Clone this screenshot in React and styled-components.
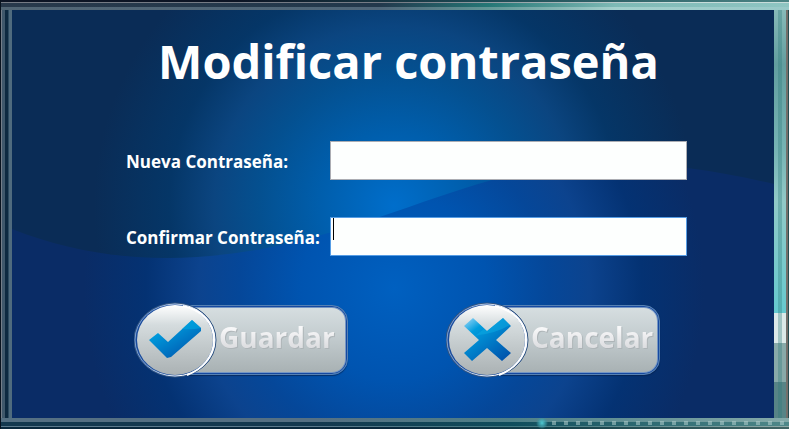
import React from "react";
import styled, { createGlobalStyle } from "styled-components";

const GlobalStyle = createGlobalStyle`
  * { box-sizing: border-box; }
  body { margin: 0; background: #0a2c56; font-family: "Open Sans", "Noto Sans", sans-serif; }
`;

const WindowFrame = styled.main`
  min-height: 100vh;
  display: flex;
  padding: 10px 15px 11px 12px;
  background:
    linear-gradient(#08131f, #08131f) 0 0 / 1px 100% no-repeat,
    radial-gradient(circle, #4fc9d2, #3b9aa688 50%, transparent 70%) 69% 100% / 12px 12px no-repeat,
    repeating-linear-gradient(90deg, transparent 0 8px, #b4d0cf88 8px 12px) 100% calc(100% - 4px) / 31% 4px no-repeat,
    linear-gradient(90deg, #0c1424 30%, #1d4b55 62%, #4b8585) 0 0 / 100% 2px no-repeat,
    linear-gradient(90deg, #767b85 50%, #c8dcda 85%) 0 2px / 100% 1px no-repeat,
    linear-gradient(90deg, #28394b, #22384c 48%, #257776 62%, #7eb9b5 78%, #8ec5c2) 0 3px / 100% 4px no-repeat,
    linear-gradient(90deg, #526675, #50677a 48%, #629897 62%, #a4d0cc 78%, #98c9c8) 0 7px / 100% 3px no-repeat,
    linear-gradient(90deg, #09283c 50%, #14414b 70%, #416565) 0 100% / 100% 2px no-repeat,
    linear-gradient(90deg, #5c7a8c 40%, #40777f 65%, #91aaa7) 0 calc(100% - 2px) / 100% 1px no-repeat,
    linear-gradient(90deg, #14394f 40%, #104e5d 65%, #4f8889) 0 calc(100% - 3px) / 100% 4px no-repeat,
    linear-gradient(90deg, #557083 40%, #4e8088 65%, #84aaa9) 0 calc(100% - 7px) / 100% 4px no-repeat,
    linear-gradient(90deg, #747e89 0 1px, #3f586b 1px 4px, #0d2a41 4px 7px, #2c4c62 7px 8px, #4f6b7e 8px 12px) 1px 0 / 12px 100% no-repeat,
    linear-gradient(90deg, transparent 0 4px, #2a777755 4px 8px, transparent 8px 12px, #736f6a 12px 14px, #264c50 14px) 100% 0 / 15px 100% no-repeat,
    linear-gradient(#8ebfbd, #629e9f 15%, #76b4b4 35%, #91c9c7 47%, #65c9cf 73%, #dce9e8 73% 80%, #88aaa9 80% 89%, #578486 89%) 100% 0 / 15px 100% no-repeat,
    #203f50;
`;

const Panel = styled.section`
  position: relative;
  isolation: isolate;
  flex: 1;
  min-width: 0;
  display: flex;
  flex-direction: column;
  overflow: hidden;
  background: #0a2c56;
`;

const Backdrop = styled.svg`
  position: absolute;
  inset: 0;
  z-index: -1;
  width: 100%;
  height: 100%;
`;

const Title = styled.h1`
  margin: 17px 0 0 31px;
  color: #fff;
  font-size: 47px;
  line-height: 68px;
  font-weight: 700;
  text-align: center;
  white-space: nowrap;
`;

const Form = styled.form`
  display: flex;
  flex-direction: column;
  margin: 46px 87px 0 114px;
`;

const Fields = styled.div`
  display: grid;
  gap: 37px;
`;

const Field = styled.div`
  display: grid;
  grid-template-columns: 204px minmax(0, 1fr);
  align-items: center;
`;

const Label = styled.label`
  padding-top: 3px;
  color: #fff;
  font-size: 17px;
  line-height: 24px;
  font-weight: 700;
  white-space: nowrap;
`;

const InputWrap = styled.div`
  position: relative;
  display: flex;
`;

const TextInput = styled.input`
  width: 100%;
  height: 39px;
  padding: 0 4px;
  border: 1px solid ${(p) => (p.$active ? "#569de5" : "#abadb3")};
  border-radius: 0;
  background: #fdfffe;
  font: 17px "Open Sans", sans-serif;
  caret-color: transparent;
  outline: none;
`;

const Caret = styled.span`
  position: absolute;
  left: 3px;
  top: 1px;
  width: 1px;
  height: 22px;
  background: #000;
`;

const Actions = styled.div`
  display: flex;
  gap: 98px;
  margin: 46px 0 0 8px;
`;

const ActionButton = styled.button`
  display: flex;
  align-items: center;
  width: 214px;
  height: 76px;
  padding: 0;
  border: 0;
  background: none;
  font: 700 28px/36px "Open Sans", "Noto Sans", sans-serif;
  cursor: pointer;
`;

const Badge = styled.svg`
  position: relative;
  z-index: 1;
  flex: none;
  width: 83px;
  height: 76px;
`;

const Plate = styled.span`
  display: flex;
  align-items: center;
  flex: 1;
  height: 70px;
  margin-left: -42px;
  padding: 0 0 6px 43px;
  border: 1px solid #5681b3;
  border-radius: 16px;
  background: linear-gradient(#d7dfe1, #c3cccf 45%, #a7b0b2) padding-box;
  box-shadow: inset 0 0 0 1px #1649a0, inset 0 0 0 2px #7496c4, 0 1px 1px #071c4499;
`;

const Caption = styled.span`
  background: linear-gradient(#f8f8f9 25%, #dcdde0 80%);
  background-clip: text;
  color: transparent;
  filter: drop-shadow(1px 1px 0 #aeb5b8);
`;

function Wallpaper() {
  return (
    <Backdrop viewBox="0 0 762 408" preserveAspectRatio="none" aria-hidden="true">
      <defs>
        <radialGradient id="sky" gradientUnits="userSpaceOnUse" cx="382" cy="196" r="300">
          <stop offset="0" stopColor="#006ecb" />
          <stop offset=".25" stopColor="#005eac" />
          <stop offset=".45" stopColor="#045090" />
          <stop offset=".6" stopColor="#0b4580" />
          <stop offset=".75" stopColor="#053667" />
          <stop offset="1" stopColor="#0a2c56" />
        </radialGradient>
        <radialGradient id="sea" gradientUnits="userSpaceOnUse" cx="382" cy="278" r="310">
          <stop offset="0" stopColor="#0060c0" />
          <stop offset=".3" stopColor="#0054b0" />
          <stop offset=".5" stopColor="#054799" />
          <stop offset=".63" stopColor="#0c438e" />
          <stop offset=".8" stopColor="#043273" />
          <stop offset="1" stopColor="#0a2c66" />
        </radialGradient>
      </defs>
      <path fill="url(#sky)" d="M0 0h762v408H0z" />
      <path fill="url(#sea)" d="M0 219C78 250 160 255 250 239C345 220 400 193 480 170C575 145 660 150 762 174V408H0z" />
    </Backdrop>
  );
}

function RoundBadge({ id, children }) {
  return (
    <Badge viewBox="0 0 83 76" aria-hidden="true">
      <defs>
        <linearGradient id={`${id}-disc`} x2="0" y2="1">
          <stop offset="0" stopColor="#fff" />
          <stop offset=".28" stopColor="#d5dcde" />
          <stop offset="1" stopColor="#aab1b3" />
        </linearGradient>
        <linearGradient id={`${id}-rim`} x2="1" y2=".2">
          <stop offset=".2" stopColor="#7d9fce" />
          <stop offset=".75" stopColor="#fff" />
        </linearGradient>
        <linearGradient id={`${id}-mark`} x2=".8" y2="1">
          <stop offset="0" stopColor={id === "cancel" ? "#a5dcfa" : "#0093d8"} />
          <stop offset=".28" stopColor="#009cdd" />
          <stop offset="1" stopColor="#0054ad" />
        </linearGradient>
      </defs>
      <ellipse cx="41" cy="38" rx="41" ry="37" fill="#194b9c" stroke="#33557f" />
      <ellipse cx="41" cy="38" rx="40" ry="36" fill="none" stroke={`url(#${id}-rim)`} />
      <ellipse cx="41" cy="38" rx="38" ry="35" fill={`url(#${id}-disc)`} />
      <path d="M49 4C69 8 80 22 80 38S69 67 53 73" fill="none" stroke="#fff" strokeWidth="2" />
      {children}
    </Badge>
  );
}

function SaveIcon() {
  return (
    <RoundBadge id="save">
      <path fill="url(#save-mark)" d="M15 38L24 31L34 40L58 18L67 26V29L37 55L33 56Z" />
      <path fill="#00a6e1" fillOpacity=".6" d="M58 18L67 26Q58 28 48 27Z" />
    </RoundBadge>
  );
}

function CancelIcon() {
  return (
    <RoundBadge id="cancel">
      <path fill="url(#cancel-mark)" d="M27 16L41 29L57 16L65 24L50 38L65 51L56 59L41 46L26 59L18 51L33 38L18 24Z" />
      <path fill="#0bace4" fillOpacity=".5" d="M41 29L57 16L64 23Q50 31 33 33L29 34L38 27Z" />
    </RoundBadge>
  );
}

export default function App() {
  return (
    <>
      <GlobalStyle />
      <WindowFrame>
        <Panel>
          <Wallpaper />
          <Title>Modificar contraseña</Title>
          <Form onSubmit={(e) => e.preventDefault()}>
            <Fields>
              <Field>
                <Label htmlFor="new-password">Nueva Contraseña:</Label>
                <InputWrap>
                  <TextInput id="new-password" type="password" />
                </InputWrap>
              </Field>
              <Field>
                <Label htmlFor="confirm-password">Confirmar Contraseña:</Label>
                <InputWrap>
                  <TextInput id="confirm-password" type="password" $active />
                  <Caret />
                </InputWrap>
              </Field>
            </Fields>
            <Actions>
              <ActionButton type="submit">
                <SaveIcon />
                <Plate><Caption>Guardar</Caption></Plate>
              </ActionButton>
              <ActionButton type="button">
                <CancelIcon />
                <Plate><Caption>Cancelar</Caption></Plate>
              </ActionButton>
            </Actions>
          </Form>
        </Panel>
      </WindowFrame>
    </>
  );
}
